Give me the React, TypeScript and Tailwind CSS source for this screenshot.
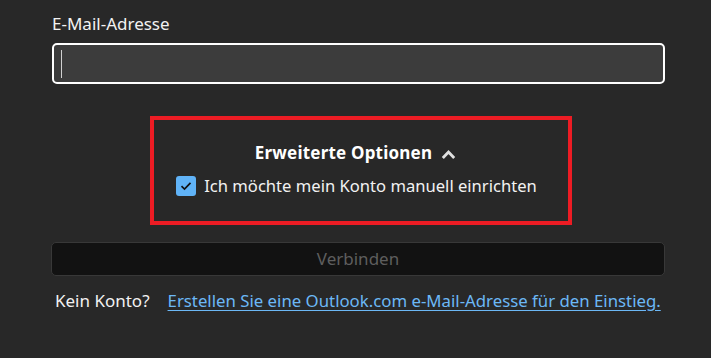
import React from 'react';

export default function App() {
  return (
    <div
      className="w-[711px] h-[358px] bg-[#282828] text-white overflow-hidden"
      style={{ fontFamily: '"Noto Sans", "Open Sans", sans-serif' }}
    >
      <div className="flex flex-col pl-[52px] pt-[12px]">
        {/* Email field */}
        <label className="text-[17px] leading-[24px] text-[#f2f2f2]">E-Mail-Adresse</label>
        <div className="mt-[7px] w-[613px] h-[41px] rounded-[5px] border-2 border-white bg-[#3c3c3c] flex items-center pl-[7px]">
          <div className="w-px h-[28px] bg-[#d0d0d0]"></div>
        </div>

        {/* Advanced options (highlighted) */}
        <div className="ml-[98px] mt-[32px] w-[422px] h-[109px] border-4 border-[#ed1c24] flex flex-col items-center">
          <button className="mt-[21px] flex items-center gap-[9px] text-[17px] font-bold tracking-[0.2px] leading-[24px] text-white -ml-[11px]">
            Erweiterte Optionen
            <svg width="15" height="11" viewBox="0 0 15 11" className="mt-[3px]">
              <path d="M1.8 9 L7.5 3 L13.2 9" fill="none" stroke="#e0e0e0" strokeWidth="2.8" />
            </svg>
          </button>
          <label className="mt-[9px] flex items-center gap-[8px] text-[16.6px] leading-[24px] text-[#f2f2f2] -ml-[9px]">
            <span className="w-[20px] h-[20px] rounded-[3px] bg-[#60b3f7] flex items-center justify-center">
              <svg width="12" height="10" viewBox="0 0 12 10">
                <path d="M1.5 5.2 L4.5 8 L10.5 1.8" fill="none" stroke="#111" strokeWidth="1.7" />
              </svg>
            </span>
            Ich möchte mein Konto manuell einrichten
          </label>
        </div>

        {/* Connect button */}
        <button
          disabled
          className="mt-[17px] w-[614px] -ml-px h-[34px] rounded-[5px] border border-[#383838] bg-[#121212] text-[17px] text-[#5e5e5e]"
        >
          Verbinden
        </button>

        {/* Footer */}
        <div className="mt-[13px] flex items-center text-[17px] leading-[24px] ml-[3px]">
          <span className="text-[#f2f2f2]">Kein Konto?</span>
          <a href="#" className="ml-[18px] text-[16.8px] text-[#6cb8f6] underline underline-offset-[3px]">
            Erstellen Sie eine Outlook.com e-Mail-Adresse für den Einstieg.
          </a>
        </div>
      </div>
    </div>
  );
}
